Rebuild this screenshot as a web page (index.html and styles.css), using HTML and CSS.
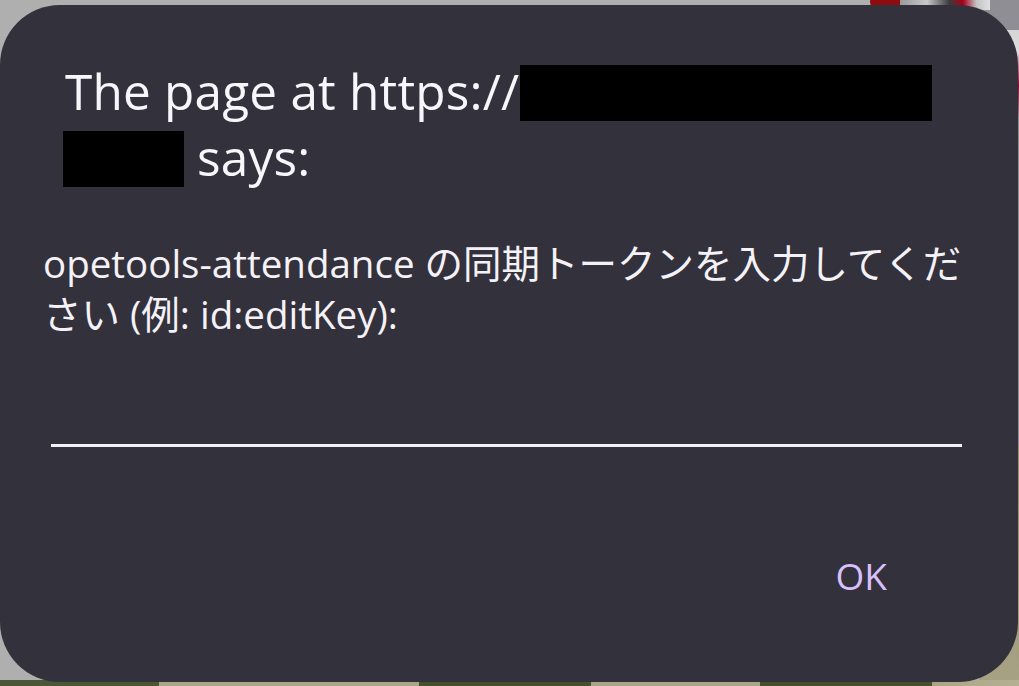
FILE: index.html
```html
<!DOCTYPE html>
<html lang="ja">
<head>
<meta charset="utf-8">
<title>Prompt</title>
<link rel="stylesheet" href="styles.css">
</head>
<body>
<div class="backdrop">
  <span class="blob blob-a"></span>
  <span class="blob blob-b"></span>
  <span class="blob blob-c"></span>
  <div class="dialog" role="dialog">
    <h1 class="title">The page at https://<span class="redact redact-1"></span> <span class="redact redact-2"></span> says:</h1>
    <p class="message">opetools-attendance の同期トークンを入力してください (例: id:editKey):</p>
    <input class="field" type="text" aria-label="token">
    <div class="actions">
      <button class="btn" type="button">OK</button>
    </div>
  </div>
</div>
</body>
</html>
```
FILE: styles.css
```css
html, body {
  margin: 0;
  padding: 0;
}
body {
  width: 1019px;
  height: 686px;
  overflow: hidden;
  font-family: "Open Sans", "Noto Sans CJK JP", sans-serif;
}
.backdrop {
  position: relative;
  width: 1019px;
  height: 686px;
  padding-top: 5px;
  box-sizing: border-box;
  background-color: #afafaf;
  background-image:
    linear-gradient(to right,
      #4b5637 0, #4b5637 159px,
      #a9a78a 159px, #a9a78a 419px,
      #46502f 419px, #46502f 591px,
      #a8a689 591px, #a8a689 760px,
      #46502f 760px, #46502f 932px,
      #a9a586 932px, #b5b091 1019px),
    linear-gradient(to bottom, #8e8e94 0, #8e8e94 445px, #999274 445px, #a7a283 686px);
  background-size: 100% 6px, 40px 686px;
  background-position: left bottom, right top;
  background-repeat: no-repeat, no-repeat;
}
.blob {
  position: absolute;
  display: block;
}
.blob-a {
  left: 870px;
  top: -8px;
  width: 34px;
  height: 20px;
  border-radius: 50%;
  background: #8e0b10;
}
.blob-b {
  left: 900px;
  top: -4px;
  width: 90px;
  height: 14px;
  background: linear-gradient(to right, #9a9a9a, #c8c8c8 30%, #3a3a3a 55%, #a8001a 70%, #c4c4c4 85%, #e0e0e0);
}
.blob-c {
  left: 1000px;
  top: 30px;
  width: 30px;
  height: 110px;
  background: linear-gradient(to bottom, #d5d5d5 0, #ddd 20%, #a0002a 50%, #8d8d92 80%);
}
.dialog {
  position: relative;
  width: 1018px;
  height: 677px;
  box-sizing: border-box;
  background: #33313c;
  border-radius: 60px;
  padding: 53px 0 0 0;
  display: flex;
  flex-direction: column;
}
.title {
  margin: 0;
  padding: 0 40px 0 65px;
  font-weight: 400;
  font-size: 49.5px;
  letter-spacing: 0.2px;
  line-height: 66px;
  color: #f7f6fa;
}
.redact {
  display: inline-block;
  background: #000;
  height: 56px;
  vertical-align: -11px;
}
.redact-1 {
  width: 412px;
  margin-left: 1px;
}
.redact-2 {
  width: 121px;
  margin-left: -2px;
}
.message {
  margin: 48px 0 0 0;
  padding: 0 40px 0 43px;
  font-size: 38.5px;
  line-height: 51px;
  color: #f4f2f7;
}
.field {
  margin: 60px 56px 0 51px;
  height: 44px;
  padding: 0;
  border: 0;
  border-bottom: 3px solid #f3f1f6;
  background: transparent;
  outline: none;
  color: #f4f2f7;
  font: inherit;
  font-size: 36px;
}
.actions {
  display: flex;
  justify-content: flex-end;
  margin-top: 109px;
  padding-right: 131px;
}
.btn {
  border: 0;
  background: transparent;
  padding: 0;
  font-family: "Open Sans", sans-serif;
  font-size: 37px;
  line-height: 40px;
  color: #d8c0fb;
}
```
